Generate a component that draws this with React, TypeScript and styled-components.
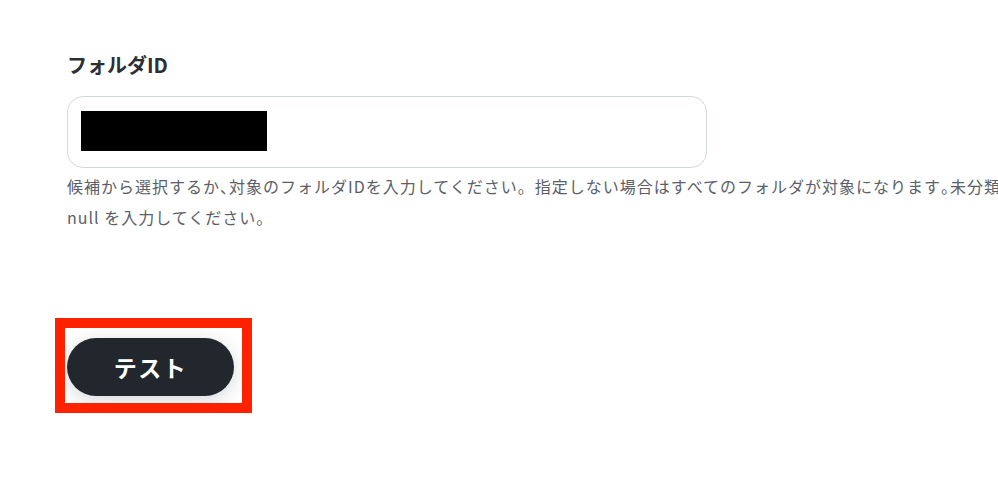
import styled, { createGlobalStyle } from "styled-components";

const GlobalStyle = createGlobalStyle`
  html, body {
    margin: 0;
    padding: 0;
    background: #fff;
    overflow: hidden;
  }
  body {
    font-family: "Noto Sans CJK JP", "Noto Sans", sans-serif;
  }
`;

export default function App() {
  return (
    <>
      <GlobalStyle />
      <Page>
        <Field>
          <Label>フォルダID</Label>
          <InputBox>
            <Redacted />
          </InputBox>
          <Help>
            候補から選択するか<Punct>、</Punct>対象のフォルダIDを入力してください。指定しない場合はすべてのフォルダが対象になります<Punct>。</Punct>未分類のフォルダを対象とする場合は
            <br />
            null を入力してください。
          </Help>
        </Field>
        <ButtonArea>
          <TestButton type="button">
            テスト
            <Highlight />
          </TestButton>
        </ButtonArea>
      </Page>
    </>
  );
}

const Page = styled.div`
  display: flex;
  flex-direction: column;
  width: 998px;
  height: 482px;
  padding: 52px 0 0 67px;
  box-sizing: border-box;
`;

const Field = styled.div`
  display: flex;
  flex-direction: column;
  align-items: flex-start;
`;

const Label = styled.div`
  color: #2b2e33;
  font-size: 20px;
  font-weight: 600;
  line-height: 26px;
`;

const InputBox = styled.div`
  display: flex;
  align-items: flex-start;
  width: 640px;
  height: 72px;
  margin-top: 18px;
  padding: 14px 13px;
  box-sizing: border-box;
  border: 1px solid #d4d8df;
  border-radius: 16px;
  background: #fff;
`;

const Redacted = styled.span`
  display: block;
  width: 186px;
  height: 40px;
  background: #000;
`;

const Help = styled.p`
  margin: 3px 0 0;
  color: #5b6068;
  font-size: 16px;
  line-height: 31px;
  letter-spacing: 1px;
  white-space: nowrap;
`;

const Punct = styled.span`
  letter-spacing: -7px;
`;

const ButtonArea = styled.div`
  display: flex;
  margin-top: 105px;
`;

const TestButton = styled.button`
  position: relative;
  display: flex;
  align-items: center;
  justify-content: center;
  width: 167px;
  height: 58px;
  padding: 0;
  border: none;
  border-radius: 29px;
  background: #22272e;
  color: #fff;
  font-family: "Noto Sans CJK JP", sans-serif;
  font-size: 23px;
  font-weight: 700;
  letter-spacing: 1.5px;
  box-shadow: 0 4px 18px rgba(30, 40, 50, 0.18);
  cursor: pointer;
`;

const Highlight = styled.span`
  position: absolute;
  left: -12px;
  top: -20px;
  right: -18px;
  bottom: -17px;
  border: 10px solid #ff2200;
  pointer-events: none;
`;
